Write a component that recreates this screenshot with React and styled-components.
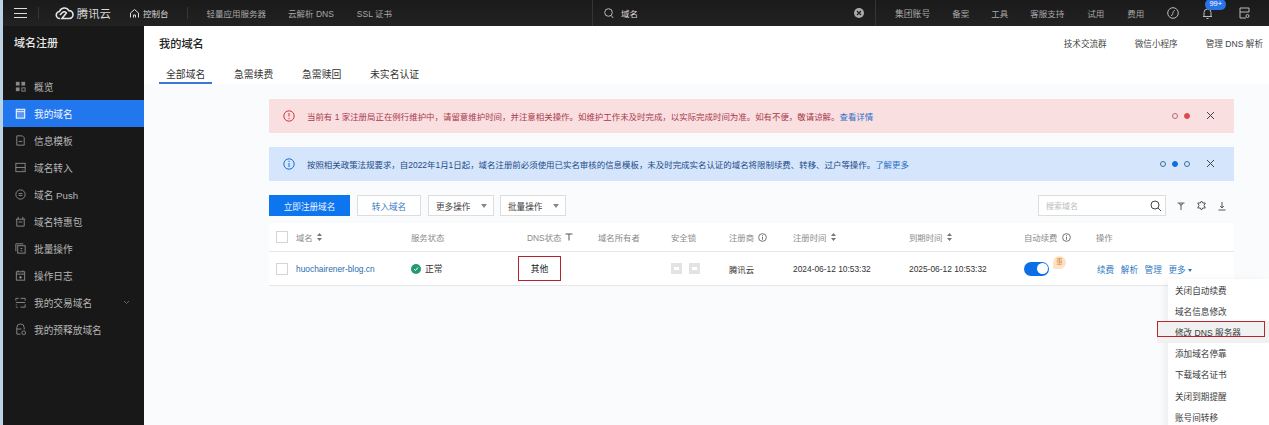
import React from "react";
import styled, { createGlobalStyle } from "styled-components";

const Global = createGlobalStyle`
  html, body { margin: 0; padding: 0; background: #fff; overflow: hidden; }
  *, *::before, *::after { box-sizing: border-box; }
  body { font-family: "Liberation Sans", "Noto Sans CJK SC", sans-serif; }
`;

const Page = styled.div`
  width: 1269px; height: 425px; overflow: hidden; position: relative;
  display: flex; flex-direction: column;
  background: #bcd3e6; padding-left: 3px;
`;
const TopBar = styled.header`
  height: 26px; flex: none; display: flex; align-items: center;
  background: linear-gradient(#1a1a1a, #222); color: #c4c4c4;
  font-size: 8.8px; white-space: nowrap;
`;
const Burger = styled.div`
  width: 13px; height: 10px; margin-left: 11px; flex: none;
  border-top: 1px solid #ddd; border-bottom: 1px solid #ddd; position: relative;
  &::after { content: ""; position: absolute; left: 0; right: 0; top: 3.5px; height: 1px; background: #ddd; }
`;
const BarDivider = styled.i`
  width: 1px; height: ${p => p.$h || 12}px; background: #353535; flex: none; margin-left: ${p => p.$ml}px;
`;
const Brand = styled.div`
  display: flex; align-items: center; gap: 3px; margin-left: 16px; font-size: 11.4px; color: #d8d8d8; width: 56px; flex: none;
`;
const Console = styled.div`
  display: flex; align-items: center; gap: 3px; margin-left: 18px; color: #d5d5d5; flex: none; font-size: 8.5px;
`;
const NavText = styled.span`
  margin-left: ${p => p.$ml}px; flex: none; color: ${p => p.$c || "#a8a8a8"}; font-size: ${p => p.$fs || 8.5}px;
`;
const BarIcon = styled.span`
  margin-left: ${p => p.$ml}px; flex: none; display: flex; position: relative; color: #bbb;
`;
const Badge = styled.span`
  position: absolute; left: 3px; top: -8px; width: 21px; height: 11px; border-radius: 6px;
  background: #2a72e8; color: #fff; font-size: 7.5px; line-height: 10px; text-align: center;
`;
const Body = styled.div`
  flex: 1; display: flex; min-height: 0;
`;
const Sidebar = styled.aside`
  width: 141px; flex: none; background: #181818; color: #b5b5b5; display: flex; flex-direction: column;
`;
const SideTitle = styled.div`
  height: 47px; flex: none; padding: 10px 0 0 11px; font-size: 11px; line-height: 15px; font-weight: 500; color: #e6e6e6;
`;
const SideItem = styled.div`
  height: 27px; flex: none; display: flex; align-items: center; gap: 7px; padding: 0 14px 0 11px; font-size: 9.7px;
  background: ${p => p.$active ? "#2277ee" : "transparent"};
  color: ${p => p.$active ? "#f2f6fd" : "#b5b5b5"};
  svg { flex: none; }
`;
const SideLabel = styled.span` flex: 1; white-space: nowrap; `;
const Main = styled.main`
  flex: 1; min-width: 0; background: #fafbfc; display: flex; flex-direction: column; position: relative;
`;
const PageHead = styled.div`
  height: 58px; flex: none; background: #fff; padding: 0 6px 0 15px; display: flex; flex-direction: column;
`;
const HeadTop = styled.div`
  display: flex; justify-content: space-between; align-items: flex-start; padding-top: 11px; height: 37px;
`;
const PageTitle = styled.h1`
  margin: 0; font-size: 11.2px; font-weight: 500; color: #222; line-height: 15px;
`;
const HeadLinks = styled.div`
  display: flex; gap: 28px; font-size: 8.6px; color: #444; line-height: 15px;
`;
const Tabs = styled.div` display: flex; gap: 14.6px; `;
const Tab = styled.div`
  height: 21px; padding: 5px 7px 0; font-size: 9.85px; line-height: 13px; color: #333; white-space: nowrap;
  border-bottom: 2px solid ${p => p.$active ? "#3b78d0" : "transparent"};
`;
const Content = styled.div`
  flex: 1; padding: 15px 35px 0 125px; display: flex; flex-direction: column; min-height: 0;
`;
const Banner = styled.div`
  height: 34px; flex: none; margin-bottom: 14px; display: flex; align-items: center; padding: 0 19px 1px 14px;
  background: ${p => p.$kind === "error" ? "#fadfe0" : "#d4e5fc"};
  font-size: 8.45px; white-space: nowrap;
  color: ${p => p.$kind === "error" ? "#a8384c" : "#234a86"};
`;
const BannerText = styled.span` flex: 1; margin-left: 12px; `;
const BannerLink = styled.span` color: #2c6fc4; `;
const Dots = styled.div` display: flex; gap: 6px; margin-right: 16px; `;
const Dot = styled.i`
  width: 6px; height: 6px; border-radius: 50%; display: block;
  border: 1px solid ${p => p.$c};
  background: ${p => p.$on ? p.$c : "transparent"};
`;
const Toolbar = styled.div`
  height: 21px; flex: none; display: flex; align-items: stretch; margin-bottom: 7px;
`;
const PrimaryBtn = styled.div`
  width: 81px; background: #0d75ee; color: #eaf3ff; font-size: 8.6px; display: flex; align-items: center; justify-content: center; margin-right: 7px;
`;
const GhostBtn = styled.div`
  width: 64px; background: #fff; border: 1px solid #ddd; color: #3a7cc6; font-size: 8.6px; display: flex; align-items: center; justify-content: center; margin-right: 7px;
`;
const SelectBtn = styled.div`
  width: 66px; background: #fff; border: 1px solid #ddd; color: #444; font-size: 8.6px; display: flex; align-items: center; justify-content: space-between; padding: 0 6px 0 7px; margin-right: 6px;
  &::after { content: ""; border: 3px solid transparent; border-top: 4px solid #888; border-bottom: 0; }
`;
const Spacer = styled.div` flex: 1; `;
const SearchBox = styled.div`
  width: 128px; background: #fff; border: 1px solid #ddd; display: flex; align-items: center; justify-content: space-between; padding: 0 3px 0 7px; font-size: 8px; color: #bbb;
`;
const ToolIcons = styled.div`
  display: flex; align-items: center; gap: 10px; margin: 0 7px 0 10px; color: #555;
`;
const Table = styled.div` background: #fff; flex: none; `;
const Row = styled.div`
  display: grid; align-items: center; padding-left: 7px;
  grid-template-columns: 20px 115px 116px 71px 73px 58px 64px 116px 115px 72px 1fr;
  height: ${p => p.$h}px; border-bottom: 1px solid #e4e6e9;
  font-size: 8.4px; color: ${p => p.$head ? "#8a8a8a" : "#333"}; white-space: nowrap;
`;
const Check = styled.i` display: block; width: 12px; height: 12px; border: 1px solid #d4d4d4; background: #fff; `;
const Cell = styled.div` display: flex; align-items: center; gap: ${p => p.$gap || 4}px; `;
const DomainLink = styled.span` color: #2b6cb0; `;
const StatusDot = styled.span`
  width: 10px; height: 10px; border-radius: 50%; background: #239a72; display: flex; align-items: center; justify-content: center;
`;
const StatusText = styled.span` font-size: 8.8px; color: #333; `;
const OtherBadge = styled.div`
  width: 43px; height: 25px; margin-left: -9px; border: 1.5px solid #b3242e; display: flex; align-items: center; justify-content: center; color: #222; font-size: 8.8px;
`;
const LockIcon = styled.span`
  width: 11px; height: 11px; background: #e2e3e3; display: flex; align-items: center; justify-content: center;
  &::after { content: ""; width: 5px; height: 3px; background: #fff; }
`;
const Toggle = styled.span`
  width: 25px; height: 14px; border-radius: 7px; background: #0d6fe8; position: relative; display: block;
  &::after { content: ""; position: absolute; right: 1.5px; top: 1.5px; width: 11px; height: 11px; border-radius: 50%; background: #fff; }
`;
const Hui = styled.span`
  position: absolute; left: 29px; top: -6px; width: 13px; height: 13px; border-radius: 50% 50% 50% 2px; background: #fbe3c8; color: #d9822b; font-size: 6.5px; line-height: 12px; text-align: center;
`;
const ToggleWrap = styled.div` position: relative; `;
const Actions = styled.div` display: flex; align-items: center; gap: 6.6px; padding-left: 1px; font-size: 8.6px; `;
const Action = styled.span` color: #2c79c0; `;
const Caret = styled.i` display: inline-block; margin-left: 2px; border: 2.5px solid transparent; border-top: 3px solid #2c79c0; border-bottom: 0; vertical-align: middle; `;
const Menu = styled.div`
  position: absolute; left: 1024px; top: 253px; width: 101px; background: #fff;
  box-shadow: -2px 2px 8px rgba(0,0,0,.07); font-size: 8.6px; color: #3a3a3a; white-space: nowrap;
`;
const MenuItem = styled.div`
  height: 21.2px; display: flex; align-items: center; padding-left: 7px; position: relative;
  ${p => p.$hi ? `
    margin-left: -11px; padding-left: 18px; background: #f1f1f1;
    &::after { content: ""; position: absolute; left: 0; top: 0; width: 108px; height: 16px; border: 1.5px solid #b8242f; }
  ` : ""}
`;

const Ico = ({ children, size = 13, sw = 1, vb = 14, c = "currentColor" }) => (
  <svg width={size} height={size} viewBox={`0 0 ${vb} ${vb}`} fill="none" stroke={c} strokeWidth={sw}>{children}</svg>
);

const side = [
  ["概览", <><rect x="2" y="2" width="4" height="4" fill="#888" stroke="none"/><rect x="8" y="2" width="4" height="4" fill="#888" stroke="none"/><rect x="2" y="8" width="4" height="4" fill="#888" stroke="none"/><rect x="8.5" y="8.5" width="3.5" height="3.5" stroke="#888"/></>],
  ["我的域名", <><rect x="2.5" y="2.5" width="9" height="9.5" fill="#5b97ec" stroke="#eef4fd" strokeWidth="1.2"/><path d="M2.5 5h9" stroke="#eef4fd"/></>, true],
  ["信息模板", <><path d="M3 2h6l2 2v8H3z"/><path d="M5 8h4"/></>],
  ["域名转入", <><rect x="2" y="2.5" width="10" height="9"/><path d="M2 7h10M9 9.5h1"/></>],
  ["域名 Push", <><circle cx="7" cy="7" r="5"/><path d="M5 6h4M5 8h4"/></>],
  ["域名特惠包", <><path d="M2 4.5h10M3 4.5V12h8V4.5M4.5 2v2.5M9.5 2v2.5M5 7.5h4"/></>],
  ["批量操作", <><path d="M2 10V2h8"/><rect x="4" y="4" width="8" height="8"/><path d="M7 7h2M7 9.5h2"/></>],
  ["操作日志", <><rect x="2.5" y="3" width="9" height="9"/><path d="M2.5 5.5h9M4.5 1.5V3M9.5 1.5V3"/><rect x="6" y="8" width="2" height="2" fill="currentColor" stroke="none"/></>],
  ["我的交易域名", <><path d="M12 5V2.5H7M2 2.5h3M2 7h10M2 5V2.5M12 9v3H7M2 9.5h1M2 12h2"/></>],
  ["我的预释放域名", <><path d="M3 12V5a4 4 0 0 1 8 0v2M3 12h4M3 6.5h5"/><circle cx="10.5" cy="10.5" r="2"/></>],
];
const Chevron = () => <svg width="7" height="5" viewBox="0 0 7 5" fill="none" stroke="#666"><path d="M1 1l2.5 2.5L6 1"/></svg>;
const X = () => <svg width="9" height="9" viewBox="0 0 9 9" fill="none" stroke="#444" strokeWidth="1"><path d="M1 1l7 7M8 1L1 8"/></svg>;
const Info = ({ c = "#666", s = 9 }) => <svg width={s} height={s} viewBox="0 0 10 10" fill="none" stroke={c}><circle cx="5" cy="5" r="4.3"/><path d="M5 4.2v3.2M5 2.4v1"/></svg>;
const SortIcon = () => <svg width="5" height="8" viewBox="0 0 5 8" fill="#777"><path d="M2.5 0L5 3H0zM2.5 8L0 5h5z"/></svg>;
const ThinFilter = () => <svg width="8" height="8" viewBox="0 0 8 8" fill="none" stroke="#555" strokeWidth="1"><path d="M.5 1h7M4 1v6.5"/></svg>;

export default function App() {
  return (
    <Page>
      <Global />
      <TopBar>
        <Burger />
        <BarDivider $ml={11} />
        <Brand>
          <svg width="19" height="14" viewBox="0 0 19 14" fill="none" stroke="#e6e6e6" strokeWidth="1.6"><path d="M5 12.5a3.5 3.5 0 0 1-.5-7A5.2 5.2 0 0 1 14 4.6a3.9 3.9 0 0 1 .5 7.9H7L11.5 7a2.5 2.5 0 0 0-4-.5L5 9"/></svg>
          <span>腾讯云</span>
        </Brand>
        <Console>
          <svg width="11" height="11" viewBox="0 0 11 11" fill="none" stroke="#ddd"><path d="M1.5 9.5V5L5.5 1.5 9.5 5v4.5M4.5 9.5V7h2v2.5"/></svg>
          <span>控制台</span>
        </Console>
        <BarDivider $ml={18} />
        <NavText $ml={19}>轻量应用服务器</NavText>
        <NavText $ml={22}>云解析 DNS</NavText>
        <NavText $ml={23}>SSL 证书</NavText>
        <BarDivider $ml={200} $h={26} />
        <BarIcon $ml={11}><svg width="10" height="11" viewBox="0 0 10 11" fill="none" stroke="#bbb"><circle cx="4.5" cy="4.5" r="3.8"/><path d="M7.2 7.5l2 2.5"/></svg></BarIcon>
        <NavText $ml={7} $c="#ddd">域名</NavText>
        <BarIcon $ml={216}><svg width="10" height="10" viewBox="0 0 10 10"><circle cx="5" cy="5" r="5" fill="#aaa"/><path d="M3 3l4 4M7 3L3 7" stroke="#222" strokeWidth="1.2"/></svg></BarIcon>
        <BarDivider $ml={11} $h={26} />
        <NavText $ml={19} $fs={8.8}>集团账号</NavText>
        <NavText $ml={22}>备案</NavText>
        <NavText $ml={22}>工具</NavText>
        <NavText $ml={22}>客服支持</NavText>
        <NavText $ml={23}>试用</NavText>
        <NavText $ml={23}>费用</NavText>
        <BarIcon $ml={23}><svg width="12" height="12" viewBox="0 0 12 12" fill="none" stroke="#bbb"><circle cx="6" cy="6" r="5.3"/><path d="M4 8.5c2 0 1.5-1.5 2-3s1-2 2-2"/></svg></BarIcon>
        <BarIcon $ml={23}>
          <svg width="11" height="13" viewBox="0 0 11 13" fill="none" stroke="#bbb"><path d="M2 9.5V5.5a3.5 3.5 0 0 1 7 0v4M1 9.5h9M4.5 11.5h2"/></svg>
          <Badge>99+</Badge>
        </BarIcon>
        <BarIcon $ml={26}><svg width="11" height="12" viewBox="0 0 11 12" fill="none" stroke="#bbb"><path d="M10 5V1H1v10h6M1 5h9"/><circle cx="8.5" cy="9" r="1.5"/></svg></BarIcon>
      </TopBar>
      <Body>
        <Sidebar>
          <SideTitle>域名注册</SideTitle>
          {side.map(([label, icon, active]) => (
            <SideItem key={label} $active={active}>
              <Ico c={active ? "#fff" : "#8a8a8a"}>{icon}</Ico>
              <SideLabel>{label}</SideLabel>
              {label === "我的交易域名" && <Chevron />}
            </SideItem>
          ))}
        </Sidebar>
        <Main>
          <PageHead>
            <HeadTop>
              <PageTitle>我的域名</PageTitle>
              <HeadLinks><span>技术交流群</span><span>微信小程序</span><span>管理 DNS 解析</span></HeadLinks>
            </HeadTop>
            <Tabs>
              <Tab $active>全部域名</Tab>
              <Tab>急需续费</Tab>
              <Tab>急需赎回</Tab>
              <Tab>未实名认证</Tab>
            </Tabs>
          </PageHead>
          <Content>
            <Banner $kind="error">
              <svg width="12" height="12" viewBox="0 0 12 12" fill="none" stroke="#d2383f"><circle cx="6" cy="6" r="5.2"/><path d="M6 3v3.6M6 8v1.2"/></svg>
              <BannerText>当前有 1 家注册局正在例行维护中，请留意维护时间，并注意相关操作。如维护工作未及时完成，以实际完成时间为准。如有不便，敬请谅解。<BannerLink>查看详情</BannerLink></BannerText>
              <Dots><Dot $c="#b9686c" /><Dot $c="#df4a50" $on /></Dots>
              <X />
            </Banner>
            <Banner $kind="info">
              <svg width="12" height="12" viewBox="0 0 12 12" fill="none" stroke="#1a6fd8"><circle cx="6" cy="6" r="5.2"/><path d="M6 5v4M6 2.8V4"/></svg>
              <BannerText>按照相关政策法规要求，自2022年1月1日起，域名注册前必须使用已实名审核的信息模板，未及时完成实名认证的域名将限制续费、转移、过户等操作。<BannerLink>了解更多</BannerLink></BannerText>
              <Dots><Dot $c="#3f6f96" /><Dot $c="#0d6fe0" $on /><Dot $c="#3f6f96" /></Dots>
              <X />
            </Banner>
            <Toolbar>
              <PrimaryBtn>立即注册域名</PrimaryBtn>
              <GhostBtn>转入域名</GhostBtn>
              <SelectBtn>更多操作</SelectBtn>
              <SelectBtn>批量操作</SelectBtn>
              <Spacer />
              <SearchBox>
                搜索域名
                <svg width="13" height="13" viewBox="0 0 13 13" fill="none" stroke="#444"><circle cx="6" cy="6" r="4"/><path d="M9 9l3 3"/></svg>
              </SearchBox>
              <ToolIcons>
                <svg width="10" height="10" viewBox="0 0 10 10" fill="none" stroke="#666" strokeWidth="1.1"><path d="M1.5 2h7M3 2l2 2.5L7 2M5 4v5"/></svg>
                <svg width="11" height="11" viewBox="0 0 11 11" fill="none" stroke="#555"><path d="M5.5 1l1.2 2h2.6L8 5.5l1.3 2.5H6.7L5.5 10 4.3 8H1.7L3 5.5 1.7 3h2.6z"/></svg>
                <svg width="10" height="10" viewBox="0 0 10 10" fill="none" stroke="#555"><path d="M5 1v5.5M3.2 5L5 7l1.8-2M1.5 9h7"/></svg>
              </ToolIcons>
            </Toolbar>
            <Table>
              <Row $h={29} $head>
                <Check />
                <Cell>域名 <SortIcon /></Cell>
                <Cell>服务状态</Cell>
                <Cell>DNS状态 <ThinFilter /></Cell>
                <Cell>域名所有者</Cell>
                <Cell>安全锁</Cell>
                <Cell>注册商 <Info /></Cell>
                <Cell>注册时间 <SortIcon /></Cell>
                <Cell>到期时间 <SortIcon /></Cell>
                <Cell>自动续费 <Info /></Cell>
                <Cell>操作</Cell>
              </Row>
              <Row $h={34}>
                <Check />
                <Cell><DomainLink>huochairener-blog.cn</DomainLink></Cell>
                <Cell>
                  <StatusDot><svg width="6" height="6" viewBox="0 0 6 6" fill="none" stroke="#fff"><path d="M1 3l1.5 1.5L5 1.5"/></svg></StatusDot>
                  <StatusText>正常</StatusText>
                </Cell>
                <Cell><OtherBadge>其他</OtherBadge></Cell>
                <Cell />
                <Cell $gap={7}><LockIcon /><LockIcon /></Cell>
                <Cell>腾讯云</Cell>
                <Cell>2024-06-12 10:53:32</Cell>
                <Cell>2025-06-12 10:53:32</Cell>
                <Cell><ToggleWrap><Toggle /><Hui>惠</Hui></ToggleWrap></Cell>
                <Actions><Action>续费</Action><Action>解析</Action><Action>管理</Action><Action>更多<Caret /></Action></Actions>
              </Row>
            </Table>
          </Content>
          <Menu>
            {["关闭自动续费", "域名信息修改", "修改 DNS 服务器", "添加域名停靠", "下载域名证书", "关闭到期提醒", "账号间转移"].map((m) => (
              <MenuItem key={m} $hi={m.startsWith("修改")}>{m}</MenuItem>
            ))}
          </Menu>
        </Main>
      </Body>
    </Page>
  );
}
